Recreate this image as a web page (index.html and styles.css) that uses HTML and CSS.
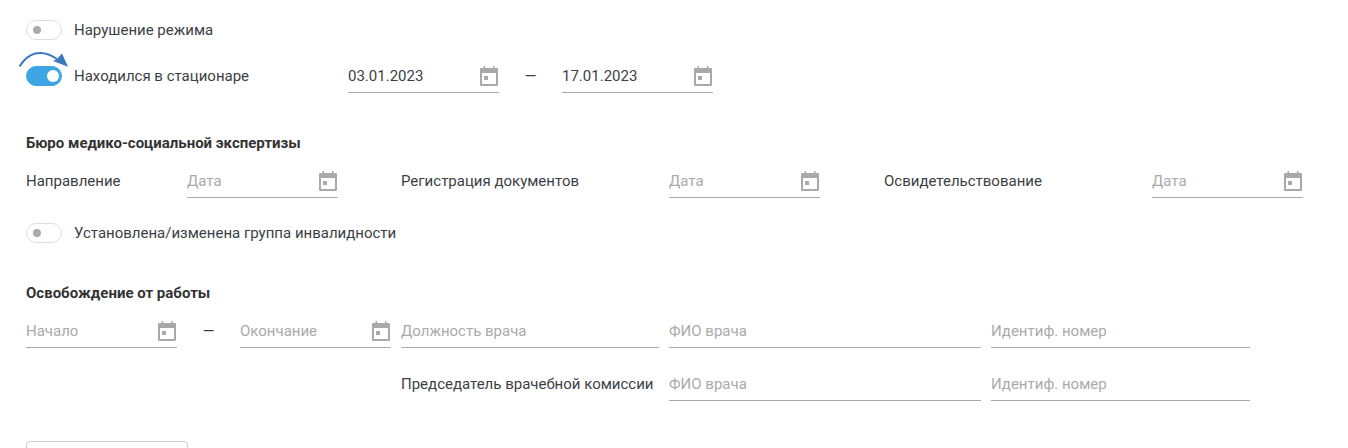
FILE: index.html
```html
<!DOCTYPE html>
<html>
<head>
    <title>Листок нетрудоспособности</title>
    <meta charset="UTF-8">
    <meta name="viewport" content="width=device-width, initial-scale=1.0">
    <link rel="stylesheet" href="styles.css">
</head>
<body>
    <svg width="0" height="0" class="defs">
        <symbol id="cal" viewBox="0 0 18 20">
            <path fill="#a9a9a9" d="M3.5 0H5v2h8V0h1.5v2H17a1 1 0 0 1 1 1v16a1 1 0 0 1-1 1H1a1 1 0 0 1-1-1V3a1 1 0 0 1 1-1h2.5zM2 7v11h14V7zm2 3h4v4H4z"/>
        </symbol>
    </svg>

    <div class="container">
        <div class="switch-row">
            <span class="switch"></span>
            <span class="switch-label">Нарушение режима</span>
        </div>

        <div class="row row-hospital">
            <svg class="arrow" width="52" height="18" viewBox="0 0 52 18">
                <path d="M0.5 14.5C9 1 22 -4 38 7" fill="none" stroke="#3a78c0" stroke-width="2"/>
                <path d="M49 14.7L34 9L38 7L43 1.5Z" fill="#3a78c0"/>
            </svg>
            <span class="switch on"></span>
            <span class="switch-label label-hospital">Находился в стационаре</span>
            <div class="field date">
                <span>03.01.2023</span>
                <svg class="cal"><use href="#cal"/></svg>
            </div>
            <span class="dash">—</span>
            <div class="field date">
                <span>17.01.2023</span>
                <svg class="cal"><use href="#cal"/></svg>
            </div>
        </div>

        <h4 class="section-title">Бюро медико-социальной экспертизы</h4>

        <div class="row row-bureau">
            <span class="label label-direction">Направление</span>
            <div class="field date empty">
                <span>Дата</span>
                <svg class="cal"><use href="#cal"/></svg>
            </div>
            <span class="label label-docs">Регистрация документов</span>
            <div class="field date empty">
                <span>Дата</span>
                <svg class="cal"><use href="#cal"/></svg>
            </div>
            <span class="label label-exam">Освидетельствование</span>
            <div class="field date empty">
                <span>Дата</span>
                <svg class="cal"><use href="#cal"/></svg>
            </div>
        </div>

        <div class="switch-row switch-disability">
            <span class="switch"></span>
            <span class="switch-label">Установлена/изменена группа инвалидности</span>
        </div>

        <h4 class="section-title">Освобождение от работы</h4>

        <div class="row row-release">
            <div class="field date empty">
                <span>Начало</span>
                <svg class="cal"><use href="#cal"/></svg>
            </div>
            <span class="dash">—</span>
            <div class="field date empty">
                <span>Окончание</span>
                <svg class="cal"><use href="#cal"/></svg>
            </div>
            <div class="field empty doctor-post"><span>Должность врача</span></div>
            <div class="field empty doctor-name"><span>ФИО врача</span></div>
            <div class="field empty doctor-id"><span>Идентиф. номер</span></div>
        </div>

        <div class="row row-chair">
            <span class="label label-chair">Председатель врачебной комиссии</span>
            <div class="field empty doctor-name"><span>ФИО врача</span></div>
            <div class="field empty doctor-id"><span>Идентиф. номер</span></div>
        </div>

        <button class="save-btn"></button>
    </div>
</body>
</html>
```

FILE: styles.css
```css
* {
    box-sizing: border-box;
    margin: 0;
    padding: 0;
}

html, body {
    height: 448px;
    overflow: hidden;
}

body {
    font-family: Roboto, sans-serif;
    font-size: 15px;
    line-height: 20px;
    color: #3b3f45;
    background: #fff;
}

.defs {
    position: absolute;
}

.container {
    height: 448px;
    padding: 20px 26px 0;
    overflow: hidden;
}

.row {
    display: flex;
    align-items: flex-start;
    height: 32px;
}

.label, .dash, .row .switch-label {
    line-height: 30px;
}

.switch-row {
    display: flex;
    align-items: center;
    height: 20px;
}

.switch {
    position: relative;
    flex: none;
    width: 36px;
    height: 20px;
    border: 1px solid #ddd;
    border-radius: 10px;
    background: #fff;
}

.switch:after {
    content: "";
    position: absolute;
    left: 6px;
    top: 5px;
    width: 8px;
    height: 8px;
    border-radius: 50%;
    background: #aaa;
}

.switch.on {
    margin-top: 5px;
    border-color: #3ea6e2;
    background: #3ea6e2;
}

.switch.on:after {
    left: 20px;
    top: 3px;
    width: 12px;
    height: 12px;
    background: #fff;
}

.switch-label {
    margin-left: 12px;
}

.row-hospital {
    position: relative;
    margin-top: 21px;
}

.arrow {
    position: absolute;
    left: -7px;
    top: -9px;
    overflow: visible;
}

.label-hospital {
    width: 274px;
}

.dash {
    width: 63px;
    text-align: center;
}

.section-title {
    margin-top: 40px;
    font-size: 15px;
    font-weight: 700;
    color: #333;
}

.field {
    display: flex;
    align-items: center;
    justify-content: space-between;
    flex: none;
    height: 32px;
    padding: 0 1px 2px 0;
    border-bottom: 1px solid #aaa;
}

.field.date {
    width: 151px;
}

.field.empty span {
    color: #aaa;
}

.cal {
    flex: none;
    width: 18px;
    height: 20px;
}

.row-bureau {
    margin-top: 13px;
}

.label-direction {
    width: 161px;
}

.label-docs {
    width: 268px;
    margin-left: 63px;
}

.label-exam {
    width: 268px;
    margin-left: 64px;
}

.switch-disability {
    margin-top: 25px;
}

.row-release {
    margin-top: 13px;
}

.doctor-post {
    width: 258px;
    margin-left: 10px;
}

.doctor-name {
    width: 312px;
    margin-left: 10px;
}

.doctor-id {
    width: 259px;
    margin-left: 10px;
}

.row-chair {
    margin-top: 21px;
}

.label-chair {
    width: 633px;
    padding-left: 375px;
}

.save-btn {
    display: block;
    width: 162px;
    height: 36px;
    margin-top: 40px;
    border: 1px solid #ccc;
    border-radius: 4px;
    background: #fff;
}
```
